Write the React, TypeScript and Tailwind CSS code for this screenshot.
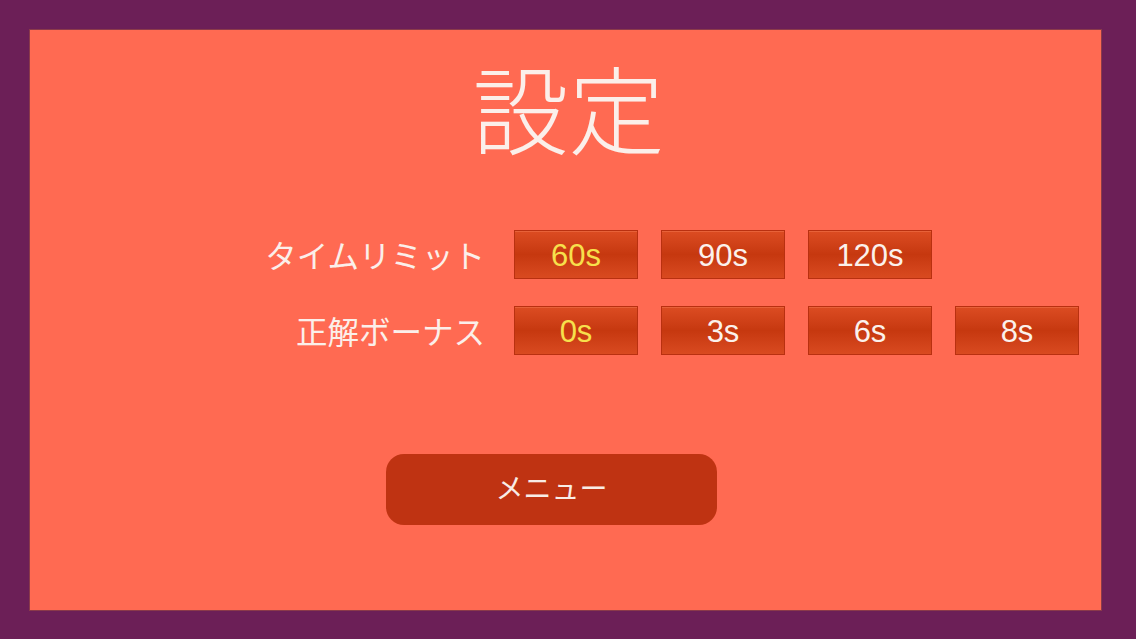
const timeLimits = [
  { label: "60s", active: true },
  { label: "90s", active: false },
  { label: "120s", active: false },
];

const bonuses = [
  { label: "0s", active: true },
  { label: "3s", active: false },
  { label: "6s", active: false },
  { label: "8s", active: false },
];

type Option = { label: string; active: boolean };

function SettingRow({ title, options }: { title: string; options: Option[] }) {
  return (
    <div className="flex items-center">
      <div className="w-[455px] pt-[6px] text-right text-[31.5px] leading-none text-[#fbefea]">
        {title}
      </div>
      <div className="ml-[29px] flex gap-[23px]">
        {options.map(({ label, active }) => (
          <button
            key={label}
            type="button"
            className={`flex h-[49px] w-[124px] items-center justify-center border border-[#b93010] bg-gradient-to-b from-[#dc4c22] via-[#c6380f] to-[#d94a20] pt-[2px] text-[31px] leading-none shadow-[inset_0_1px_0_rgba(255,140,100,0.35)] ${
              active ? "text-[#f7e04c]" : "text-[#fbf1ec]"
            }`}
          >
            {label}
          </button>
        ))}
      </div>
    </div>
  );
}

export default function App() {
  return (
    <div className="h-[639px] w-[1136px] bg-[#6c1f57] pb-[29px] pl-[30px] pr-[35px] pt-[30px] font-['Liberation_Sans','Noto_Sans_CJK_JP',sans-serif]">
      <div className="flex h-full flex-col items-center bg-[#ff6a52] shadow-[0_0_0_1px_#8a3a4a]">
        <h1 className="ml-[6px] mt-[28px] font-['Noto_Sans_CJK_JP',sans-serif] text-[96px] font-light leading-none text-[#fbefea]">
          設定
        </h1>

        <div className="mt-[76px] flex flex-col gap-[27px] self-stretch">
          <SettingRow title="タイムリミット" options={timeLimits} />
          <SettingRow title="正解ボーナス" options={bonuses} />
        </div>

        <button
          type="button"
          className="ml-[356px] mt-[99px] flex h-[71px] w-[331px] items-center justify-center self-start rounded-[18px] bg-[#bf3312] text-[28px] leading-none text-[#f8ece6]"
        >
          メニュー
        </button>
      </div>
    </div>
  );
}
